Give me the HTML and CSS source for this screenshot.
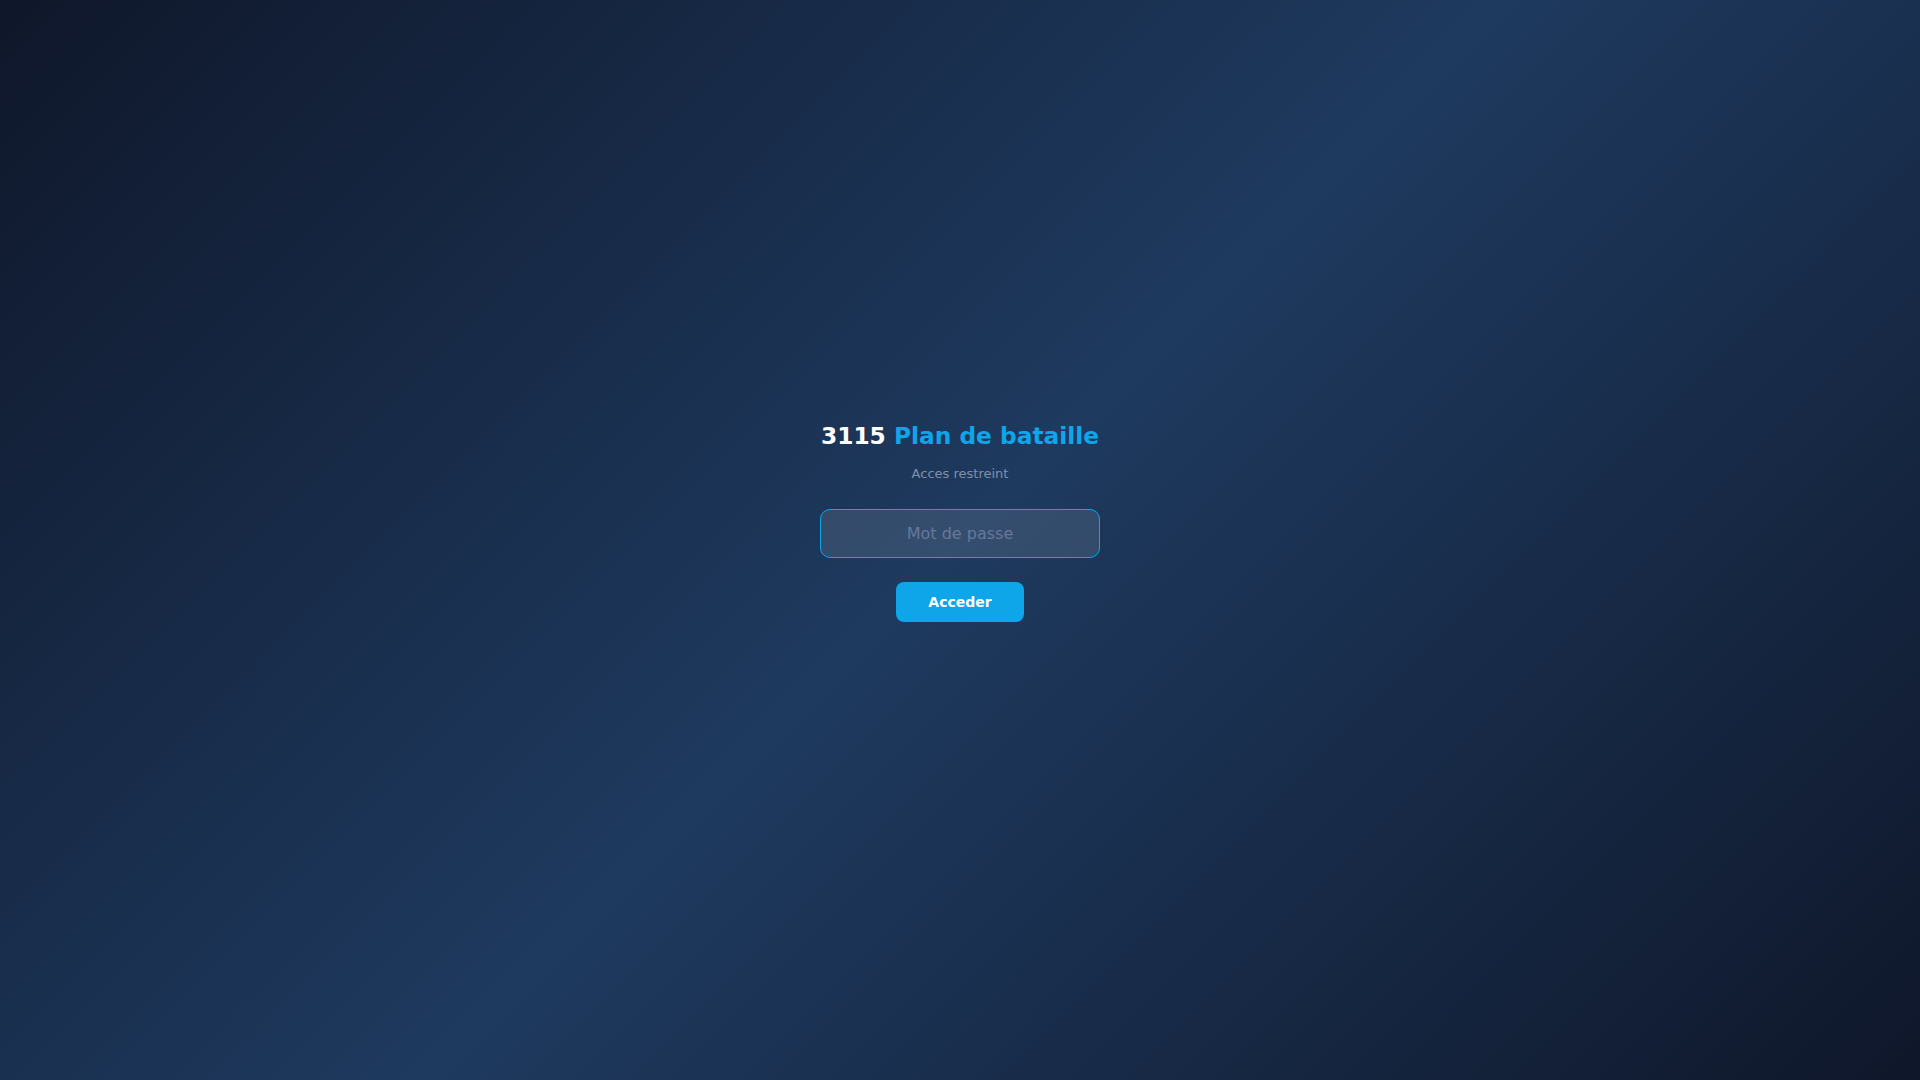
FILE: index.html
```html
<!DOCTYPE html>
<html lang="fr">
<head>
<meta charset="utf-8">
<title>3115 Plan de bataille</title>
<link rel="stylesheet" href="styles.css">
</head>
<body>
<main class="login">
  <h1 class="login-title"><span class="num">3115</span> <span class="accent">Plan de bataille</span></h1>
  <p class="login-sub">Acces restreint</p>
  <form class="login-form">
    <input class="login-input" type="password" placeholder="Mot de passe" autofocus>
    <button class="login-btn" type="button">Acceder</button>
  </form>
</main>
</body>
</html>
```

FILE: styles.css
```css
html, body {
  margin: 0;
  padding: 0;
  height: 100%;
}

body {
  font-family: "DejaVu Sans", Verdana, sans-serif;
  background: linear-gradient(135deg, #0f172a 0%, #1e3a5f 50%, #0f172a 100%);
  color: #f1f5f9;
}

.login {
  min-height: 100vh;
  box-sizing: border-box;
  display: flex;
  flex-direction: column;
  align-items: center;
  justify-content: center;
  padding-bottom: 36px;
}

.login-title {
  margin: 0 0 17px;
  font-size: 23.3px;
  font-weight: 700;
  line-height: normal;
  color: #ffffff;
}

.accent {
  color: #0ea5e9;
}

.login-sub {
  margin: 0 0 28px;
  font-size: 13px;
  line-height: normal;
  color: #8090a8;
}

.login-form {
  display: flex;
  flex-direction: column;
  align-items: center;
  gap: 24px;
}

.login-input {
  box-sizing: border-box;
  width: 280px;
  height: 49px;
  padding: 0 16px;
  border: 1px solid #0ea5e9;
  border-radius: 10px;
  background: rgba(255, 255, 255, 0.1);
  color: #f1f5f9;
  font-family: "DejaVu Sans", Verdana, sans-serif;
  font-size: 16px;
  text-align: center;
  outline: none;
  caret-color: #ffffff;
}

.login-input::placeholder {
  color: #66789a;
}

.login-btn {
  box-sizing: border-box;
  height: 40px;
  width: 128px;
  padding: 0;
  border: none;
  border-radius: 8px;
  background: #0ea5e9;
  color: #ffffff;
  font-family: "DejaVu Sans", Verdana, sans-serif;
  font-size: 14px;
  font-weight: 700;
  cursor: pointer;
}
```
